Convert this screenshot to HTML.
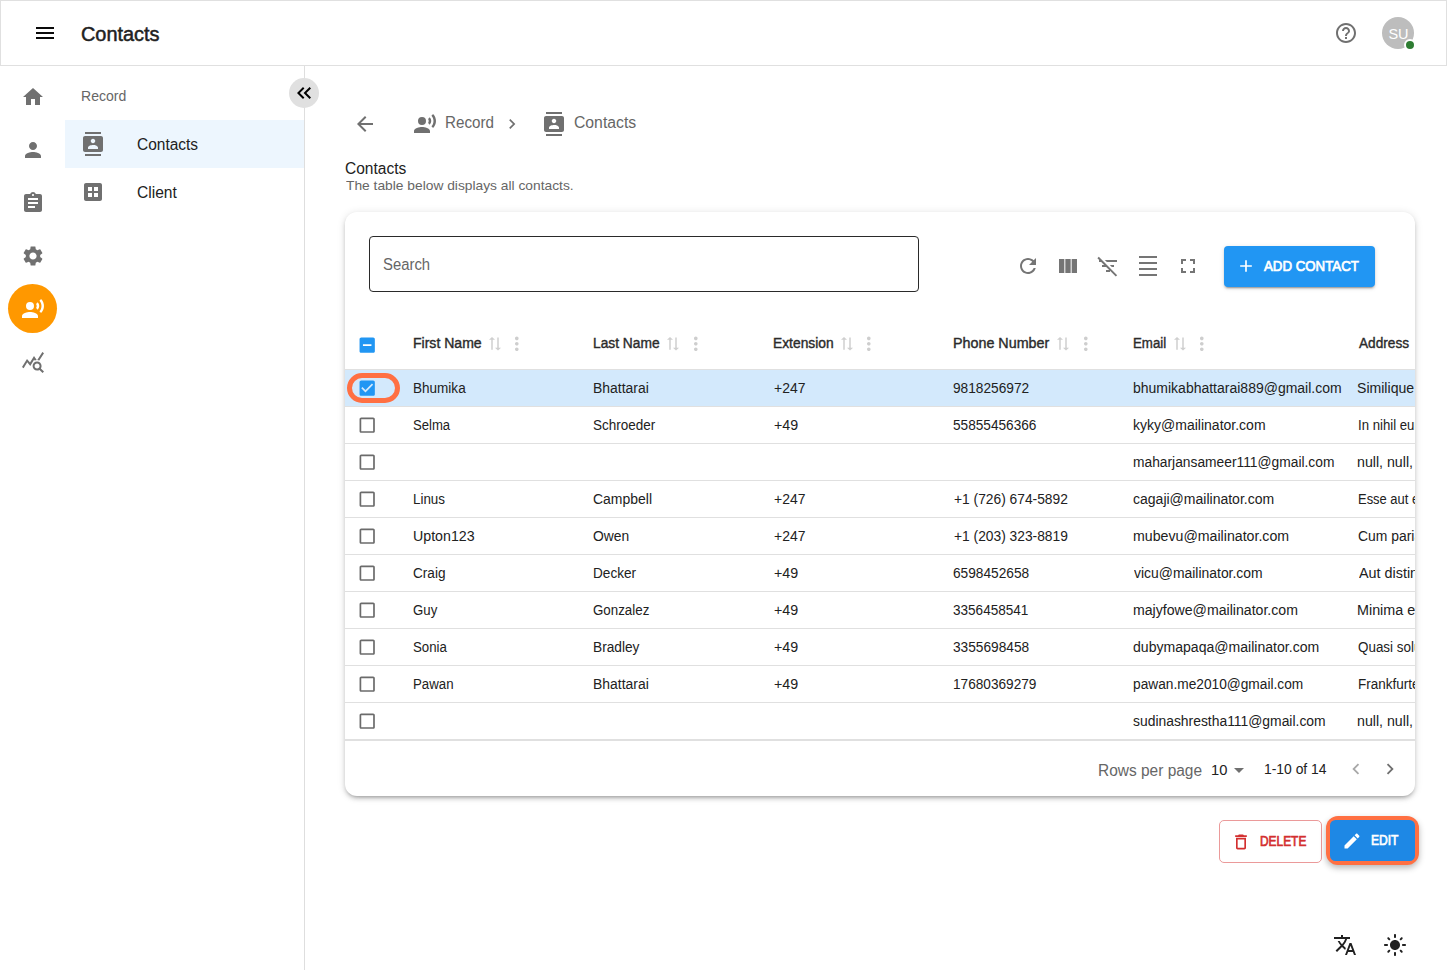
<!DOCTYPE html>
<html lang="en"><head><meta charset="utf-8"><title>Contacts</title><style>
*{box-sizing:border-box;margin:0;padding:0}
html,body{width:1447px;height:970px;overflow:hidden;background:#fff;font-family:"Liberation Sans",sans-serif;}
body{position:relative}
.i{position:absolute;display:block}
.t{position:absolute;white-space:nowrap;height:40px;line-height:40px;transform-origin:0 50%;}
#hdr{position:absolute;left:0;top:0;width:1447px;height:66px;border:1px solid #e0e0e0;background:#fff}
#av{position:absolute;left:1382px;top:17px;width:32px;height:32px;border-radius:50%;background:#bdbdbd;}
#dot{position:absolute;left:1404px;top:39px;width:12px;height:12px;border-radius:50%;background:#2e7d32;border:2px solid #fff}
#side{position:absolute;left:304px;top:66px;width:1px;height:904px;background:#dedede}
#orb{position:absolute;left:8px;top:284px;width:49px;height:49px;border-radius:50%;background:#ff9800}
#sel{position:absolute;left:65px;top:120px;width:239px;height:48px;background:#edf6fe}
#coll{position:absolute;left:289px;top:78px;width:30px;height:30px;border-radius:50%;background:#e0e0e0}
#card{position:absolute;left:345px;top:212px;width:1070px;height:584px;border-radius:12px;background:#fff;box-shadow:0 3px 3px -2px rgba(0,0,0,.2),0 3px 4px 0 rgba(0,0,0,.14),0 1px 8px 0 rgba(0,0,0,.12);}
#search{position:absolute;left:369px;top:236px;width:550px;height:56px;border:1px solid #2a2a2a;border-radius:4px}
#addbtn{position:absolute;left:1224px;top:246px;width:151px;height:41px;border-radius:4px;background:#2196f3;box-shadow:0 3px 1px -2px rgba(0,0,0,.2),0 2px 2px 0 rgba(0,0,0,.14),0 1px 5px 0 rgba(0,0,0,.12)}
#rows{position:absolute;left:345px;top:0;width:1070px;height:970px;overflow:hidden;}
#rows>*{margin-left:-345px}
.rowsel{position:absolute;left:345px;width:1070px;height:36px;background:#d3e9fc}
.rline{position:absolute;left:345px;width:1070px;height:1px;background:#e0e0e0}
#ring{position:absolute;left:347px;top:373px;width:53px;height:29.5px;border:5px solid #ff7043;border-radius:15px}
#delbtn{position:absolute;left:1219px;top:820px;width:103px;height:43px;border:1px solid #eb9a9a;border-radius:5px;background:#fff}
#editring{position:absolute;left:1326px;top:816px;width:93px;height:49px;border-radius:12px;background:#ff7043;box-shadow:0 3px 6px rgba(0,0,0,.28)}
#editbtn{position:absolute;left:1330px;top:820px;width:85px;height:41px;border-radius:5.5px;background:#1e88e5;}
</style></head><body>
<div id="hdr"></div>
<svg class="i" style="left:32.5px;top:21px;width:24px;height:24px;" viewBox="0 0 24 24"><path fill="#0a0a0a" d="M3 18h18v-2H3v2zm0-5h18v-2H3v2zm0-7v2h18V6H3z"/></svg>
<div class="t" style="left:81.01px;top:14px;font-size:20px;color:#212121;transform:scaleX(0.9949);-webkit-text-stroke:0.5px #212121;">Contacts</div>
<svg class="i" style="left:1334px;top:21px;width:24px;height:24px;" viewBox="0 0 24 24"><path fill="#707070" d="M11 18h2v-2h-2v2zm1-16C6.480 2 2 6.480 2 12s4.480 10 10 10 10-4.480 10-10S17.520 2 12 2zm0 18c-4.410 0-8-3.590-8-8s3.590-8 8-8 8 3.590 8 8-3.590 8-8 8zm0-14c-2.210 0-4 1.790-4 4h2c0-1.100.900-2 2-2s2 .900 2 2c0 2-3 1.750-3 5h2c0-2.250 3-2.500 3-5 0-2.210-1.790-4-4-4z"/></svg>
<div id="av"></div><div id="dot"></div>
<div class="t" style="left:1388.40px;top:14px;font-size:14.5px;color:#ffffff;transform:scaleX(1.0000);">SU</div>
<div id="side"></div>
<svg class="i" style="left:21px;top:85px;width:24px;height:24px;" viewBox="0 0 24 24"><path fill="#707070" d="M10 20v-6h4v6h5v-8h3L12 3 2 12h3v8z"/></svg>
<svg class="i" style="left:21px;top:138px;width:24px;height:24px;" viewBox="0 0 24 24"><path fill="#707070" d="M12 12c2.21 0 4-1.79 4-4s-1.79-4-4-4-4 1.79-4 4 1.79 4 4 4zm0 2c-2.67 0-8 1.34-8 4v2h16v-2c0-2.66-5.33-4-8-4z"/></svg>
<svg class="i" style="left:21px;top:191px;width:24px;height:24px;" viewBox="0 0 24 24"><path fill="#707070" d="M19 3h-4.18C14.4 1.84 13.3 1 12 1c-1.3 0-2.4.84-2.82 2H5c-1.1 0-2 .9-2 2v14c0 1.1.9 2 2 2h14c1.1 0 2-.9 2-2V5c0-1.1-.9-2-2-2zm-7 0c.55 0 1 .45 1 1s-.45 1-1 1-1-.45-1-1 .45-1 1-1zm2 14H7v-2h7v2zm3-4H7v-2h10v2zm0-4H7V7h10v2z"/></svg>
<svg class="i" style="left:21px;top:244px;width:24px;height:24px;" viewBox="0 0 24 24"><path fill="#707070" d="M19.14 12.94c.04-.3.06-.61.06-.94 0-.32-.02-.64-.07-.94l2.03-1.58c.18-.14.23-.41.12-.61l-1.92-3.32c-.12-.22-.37-.29-.59-.22l-2.39.96c-.5-.38-1.03-.7-1.62-.94l-.36-2.54c-.04-.24-.24-.41-.48-.41h-3.84c-.24 0-.43.17-.47.41l-.36 2.54c-.59.24-1.13.57-1.62.94l-2.39-.96c-.22-.08-.47 0-.59.22L2.74 8.87c-.12.21-.08.47.12.61l2.03 1.58c-.05.3-.09.63-.09.94s.02.64.07.94l-2.03 1.58c-.18.14-.23.41-.12.61l1.92 3.32c.12.22.37.29.59.22l2.39-.96c.5.38 1.03.7 1.62.94l.36 2.54c.05.24.24.41.48.41h3.84c.24 0 .44-.17.47-.41l.36-2.54c.59-.24 1.13-.56 1.62-.94l2.39.96c.22.08.47 0 .59-.22l1.92-3.32c.12-.22.07-.47-.12-.61l-2.01-1.58zM12 15.6c-1.98 0-3.6-1.62-3.6-3.6s1.62-3.6 3.6-3.6 3.6 1.62 3.6 3.6-1.62 3.6-3.6 3.6z"/></svg>
<div id="orb"></div>
<svg class="i" style="left:21px;top:297px;width:24px;height:24px;" viewBox="0 0 24 24"><path fill="#ffffff" d="M13 9a4 4 0 1 1-8 0 4 4 0 0 1 8 0zM9 15c-2.67 0-8 1.34-8 4v2h16v-2c0-2.66-5.33-4-8-4zm7.76-9.640l-1.680 1.690c.84 1.180.84 2.710 0 3.890l1.680 1.690c2.020-2.020 2.020-5.070 0-7.270zM20.070 2l-1.630 1.630c2.770 3.020 2.770 7.560 0 10.740L20.070 16c3.900-3.890 3.910-9.950 0-14z"/></svg>
<svg class="i" style="left:21px;top:350px;width:24px;height:24px;" viewBox="0 0 24 24"><path fill="#707070" d="M19.88 18.47c.44-.7.7-1.51.7-2.39 0-2.49-2.01-4.5-4.5-4.5s-4.5 2.01-4.5 4.5 2.01 4.5 4.49 4.5c.88 0 1.7-.26 2.39-.7L21.58 23 23 21.580l-3.120-3.110zm-3.800.110c-1.380 0-2.500-1.120-2.500-2.500s1.120-2.500 2.500-2.500 2.500 1.120 2.500 2.500-1.120 2.500-2.500 2.500zm-.360-8.500c-.740.020-1.450.180-2.100.450l-.550-.830-3.800 6.180-3.010-3.520-3.630 5.810L1 17l5-8 3 3.500L13 6l2.720 4.080zm2.590.500c-.640-.280-1.330-.450-2.050-.490L21.380 2 23 3.180l-4.690 7.400z"/></svg>
<div class="t" style="left:80.90px;top:76px;font-size:14px;color:#666666;transform:scaleX(1.0023);">Record</div>
<div id="sel"></div>
<svg class="i" style="left:81px;top:132px;width:24px;height:24px;" viewBox="0 0 24 24"><path fill="#707070" d="M20 0H4v2h16V0zM4 24h16v-2H4v2zM20 4H4c-1.1 0-2 .9-2 2v12c0 1.1.9 2 2 2h16c1.1 0 2-.9 2-2V6c0-1.1-.9-2-2-2zm-8 2.750c1.240 0 2.250 1.010 2.250 2.250s-1.010 2.250-2.250 2.250S9.750 10.240 9.750 9 10.760 6.750 12 6.750zM17 17H7v-1.500c0-1.670 3.330-2.500 5-2.500s5 .830 5 2.500V17z"/></svg>
<div class="t" style="left:137.03px;top:125px;font-size:16px;color:#212121;transform:scaleX(0.9677);">Contacts</div>
<svg class="i" style="left:81px;top:180px;width:24px;height:24px;" viewBox="0 0 24 24"><path fill="#707070" d="M19 3H5c-1.1 0-2 .9-2 2v14c0 1.1.9 2 2 2h14c1.1 0 2-.9 2-2V5c0-1.1-.9-2-2-2zm-8 14H7v-4h4v4zm0-6H7V7h4v4zm6 6h-4v-4h4v4zm0-6h-4V7h4v4z"/></svg>
<div class="t" style="left:137.03px;top:173px;font-size:16px;color:#212121;transform:scaleX(0.9750);">Client</div>
<div id="coll"></div>
<svg class="i" style="left:292px;top:81px;width:24px;height:24px;" viewBox="0 0 24 24"><path fill="#000000" d="M17.59 18 19 16.590 14.420 12 19 7.410 17.590 6l-6 6zM11 18l1.410-1.410L7.830 12l4.580-4.590L11 6l-6 6z"/></svg>
<svg class="i" style="left:353px;top:111.5px;width:24px;height:24px;" viewBox="0 0 24 24"><path fill="#707070" d="M20 11H7.830l5.590-5.590L12 4l-8 8 8 8 1.410-1.410L7.830 13H20v-2z"/></svg>
<svg class="i" style="left:413.2px;top:112px;width:24px;height:24px;" viewBox="0 0 24 24"><path fill="#707070" d="M13 9a4 4 0 1 1-8 0 4 4 0 0 1 8 0zM9 15c-2.67 0-8 1.34-8 4v2h16v-2c0-2.66-5.33-4-8-4zm7.76-9.640l-1.680 1.690c.84 1.180.84 2.710 0 3.890l1.680 1.690c2.020-2.020 2.020-5.070 0-7.270zM20.070 2l-1.630 1.630c2.770 3.020 2.770 7.560 0 10.740L20.070 16c3.900-3.890 3.910-9.950 0-14z"/></svg>
<div class="t" style="left:445.05px;top:103px;font-size:16px;color:#666666;transform:scaleX(0.9480);">Record</div>
<svg class="i" style="left:502px;top:113.5px;width:20px;height:20px;" viewBox="0 0 24 24"><path fill="#707070" d="M10 6L8.590 7.410 13.170 12l-4.580 4.590L10 18l6-6z"/></svg>
<svg class="i" style="left:542px;top:112.1px;width:24px;height:24px;" viewBox="0 0 24 24"><path fill="#707070" d="M20 0H4v2h16V0zM4 24h16v-2H4v2zM20 4H4c-1.1 0-2 .9-2 2v12c0 1.1.9 2 2 2h16c1.1 0 2-.9 2-2V6c0-1.1-.9-2-2-2zm-8 2.750c1.240 0 2.250 1.010 2.250 2.250s-1.010 2.250-2.250 2.250S9.750 10.240 9.750 9 10.760 6.750 12 6.750zM17 17H7v-1.500c0-1.670 3.330-2.500 5-2.500s5 .830 5 2.500V17z"/></svg>
<div class="t" style="left:574.02px;top:103px;font-size:16px;color:#666666;transform:scaleX(0.9839);">Contacts</div>
<div class="t" style="left:345.13px;top:149px;font-size:16px;color:#212121;transform:scaleX(0.9694);">Contacts</div>
<div class="t" style="left:345.50px;top:166px;font-size:13px;color:#666666;transform:scaleX(1.0607);">The table below displays all contacts.</div>
<div id="card"></div>
<div id="search"></div>
<div class="t" style="left:382.97px;top:245px;font-size:16px;color:#666666;transform:scaleX(0.9286);">Search</div>
<svg class="i" style="left:1016px;top:254px;width:24px;height:24px;" viewBox="0 0 24 24"><path fill="#757575" d="M17.650 6.350C16.200 4.900 14.210 4 12 4c-4.420 0-7.990 3.580-7.990 8s3.570 8 7.990 8c3.730 0 6.840-2.550 7.730-6h-2.080c-.820 2.330-3.040 4-5.650 4-3.310 0-6-2.690-6-6s2.690-6 6-6c1.660 0 3.140.690 4.220 1.780L13 11h7V4l-2.350 2.350z"/></svg>
<svg class="i" style="left:1056px;top:254px;width:24px;height:24px;" viewBox="0 0 24 24"><path fill="#757575" d="M14.670 5v14H9.330V5h5.340zm1 14H21V5h-5.330v14zm-7.340 0V5H3v14h5.330z"/></svg>
<svg class="i" style="left:1096px;top:254px;width:24px;height:24px;" viewBox="0 0 24 24"><path fill="#757575" d="M10.830 8H21V6H8.830l2 2zm5 5H18v-2h-4.170l2 2zM14 16.830V18h-4v-2h3.170l-3-3H6v-2h2.170l-3-3H3V6h.170L1.390 4.220 2.800 2.810l18.380 18.380-1.410 1.410L14 16.830z"/></svg>
<svg class="i" style="left:1136px;top:254px;width:24px;height:24px;" viewBox="0 0 24 24"><path fill="#757575" d="M3 2h18v2H3zm0 18h18v2H3zm0-6h18v2H3zm0-6h18v2H3z"/></svg>
<svg class="i" style="left:1176px;top:254px;width:24px;height:24px;" viewBox="0 0 24 24"><path fill="#757575" d="M7 14H5v5h5v-2H7v-3zm-2-4h2V7h3V5H5v5zm12 7h-3v2h5v-5h-2v3zM14 5v2h3v3h2V5h-5z"/></svg>
<div id="addbtn"></div>
<svg class="i" style="left:1236px;top:256.3px;width:20px;height:20px;" viewBox="0 0 24 24"><path fill="#ffffff" d="M19 13h-6v6h-2v-6H5v-2h6V5h2v6h6v2z"/></svg>
<div class="t" style="left:1263.90px;top:246px;font-size:14px;color:#ffffff;transform:scaleX(0.9480);-webkit-text-stroke:0.7px #ffffff;">ADD CONTACT</div>
<svg class="i" style="left:356.8px;top:334.8px;width:20.4px;height:20.4px;" viewBox="0 0 24 24"><path fill="#2196f3" d="M19 3H5c-1.100 0-2 .900-2 2v14c0 1.100.900 2 2 2h14c1.100 0 2-.900 2-2V5c0-1.100-.900-2-2-2zm-2 10H7v-2h10v2z"/></svg>
<div class="t" style="left:412.90px;top:323px;font-size:14px;color:#2b2b2b;transform:scaleX(1.0030);-webkit-text-stroke:0.38px #2b2b2b;">First Name</div>
<div class="t" style="left:592.82px;top:323px;font-size:14px;color:#2b2b2b;transform:scaleX(0.9836);-webkit-text-stroke:0.38px #2b2b2b;">Last Name</div>
<div class="t" style="left:773.21px;top:323px;font-size:14px;color:#2b2b2b;transform:scaleX(0.9867);-webkit-text-stroke:0.38px #2b2b2b;">Extension</div>
<div class="t" style="left:952.98px;top:323px;font-size:14px;color:#2b2b2b;transform:scaleX(1.0226);-webkit-text-stroke:0.38px #2b2b2b;">Phone Number</div>
<div class="t" style="left:1133.15px;top:323px;font-size:14px;color:#2b2b2b;transform:scaleX(0.9471);-webkit-text-stroke:0.38px #2b2b2b;">Email</div>
<div class="t" style="left:1358.90px;top:323px;font-size:14px;color:#2b2b2b;transform:scaleX(0.9745);-webkit-text-stroke:0.38px #2b2b2b;">Address</div>
<svg class="i" style="left:486px;top:334.4px;width:18px;height:18px;opacity:.28" viewBox="0 0 24 24"><g transform="rotate(-90 12 12) translate(12 12) scale(.9 1) translate(-12 -12) translate(-1 0)"><path fill="#555" d="M18 12l4-4-4-4v3H3v2h15zM6 12l-4 4 4 4v-3h15v-2H6v-3z"/></g></svg>
<svg class="i" style="left:506.4px;top:332.7px;width:21.6px;height:21.6px;" viewBox="0 0 24 24"><path fill="#cecece" d="M12 8c1.100 0 2-.900 2-2s-.900-2-2-2-2 .900-2 2 .900 2 2 2zm0 2c-1.100 0-2 .900-2 2s.900 2 2 2 2-.900 2-2-.900-2-2-2zm0 6c-1.100 0-2 .900-2 2s.900 2 2 2 2-.900 2-2-.900-2-2-2z"/></svg>
<svg class="i" style="left:664.4px;top:334.4px;width:18px;height:18px;opacity:.28" viewBox="0 0 24 24"><g transform="rotate(-90 12 12) translate(12 12) scale(.9 1) translate(-12 -12) translate(-1 0)"><path fill="#555" d="M18 12l4-4-4-4v3H3v2h15zM6 12l-4 4 4 4v-3h15v-2H6v-3z"/></g></svg>
<svg class="i" style="left:684.8px;top:332.7px;width:21.6px;height:21.6px;" viewBox="0 0 24 24"><path fill="#cecece" d="M12 8c1.100 0 2-.900 2-2s-.900-2-2-2-2 .900-2 2 .900 2 2 2zm0 2c-1.100 0-2 .900-2 2s.900 2 2 2 2-.900 2-2-.900-2-2-2zm0 6c-1.100 0-2 .900-2 2s.900 2 2 2 2-.900 2-2-.900-2-2-2z"/></svg>
<svg class="i" style="left:838px;top:334.4px;width:18px;height:18px;opacity:.28" viewBox="0 0 24 24"><g transform="rotate(-90 12 12) translate(12 12) scale(.9 1) translate(-12 -12) translate(-1 0)"><path fill="#555" d="M18 12l4-4-4-4v3H3v2h15zM6 12l-4 4 4 4v-3h15v-2H6v-3z"/></g></svg>
<svg class="i" style="left:858.4px;top:332.7px;width:21.6px;height:21.6px;" viewBox="0 0 24 24"><path fill="#cecece" d="M12 8c1.100 0 2-.900 2-2s-.900-2-2-2-2 .900-2 2 .900 2 2 2zm0 2c-1.100 0-2 .900-2 2s.900 2 2 2 2-.900 2-2-.900-2-2-2zm0 6c-1.100 0-2 .900-2 2s.900 2 2 2 2-.900 2-2-.900-2-2-2z"/></svg>
<svg class="i" style="left:1054.1px;top:334.4px;width:18px;height:18px;opacity:.28" viewBox="0 0 24 24"><g transform="rotate(-90 12 12) translate(12 12) scale(.9 1) translate(-12 -12) translate(-1 0)"><path fill="#555" d="M18 12l4-4-4-4v3H3v2h15zM6 12l-4 4 4 4v-3h15v-2H6v-3z"/></g></svg>
<svg class="i" style="left:1074.5px;top:332.7px;width:21.6px;height:21.6px;" viewBox="0 0 24 24"><path fill="#cecece" d="M12 8c1.100 0 2-.900 2-2s-.900-2-2-2-2 .900-2 2 .900 2 2 2zm0 2c-1.100 0-2 .900-2 2s.900 2 2 2 2-.900 2-2-.900-2-2-2zm0 6c-1.100 0-2 .900-2 2s.900 2 2 2 2-.900 2-2-.900-2-2-2z"/></svg>
<svg class="i" style="left:1170.9px;top:334.4px;width:18px;height:18px;opacity:.28" viewBox="0 0 24 24"><g transform="rotate(-90 12 12) translate(12 12) scale(.9 1) translate(-12 -12) translate(-1 0)"><path fill="#555" d="M18 12l4-4-4-4v3H3v2h15zM6 12l-4 4 4 4v-3h15v-2H6v-3z"/></g></svg>
<svg class="i" style="left:1191.3px;top:332.7px;width:21.6px;height:21.6px;" viewBox="0 0 24 24"><path fill="#cecece" d="M12 8c1.100 0 2-.900 2-2s-.900-2-2-2-2 .900-2 2 .900 2 2 2zm0 2c-1.100 0-2 .900-2 2s.900 2 2 2 2-.900 2-2-.900-2-2-2zm0 6c-1.100 0-2 .900-2 2s.900 2 2 2 2-.900 2-2-.900-2-2-2z"/></svg>
<div id="rows">
<div class="rowsel" style="top:370px"></div>
<div class="rline" style="top:406px"></div>
<svg class="i" style="left:356.8px;top:377.8px;width:20.4px;height:20.4px;" viewBox="0 0 24 24"><path fill="#2196f3" d="M19 3H5c-1.110 0-2 .900-2 2v14c0 1.100.890 2 2 2h14c1.110 0 2-.900 2-2V5c0-1.100-.890-2-2-2zm-9 14l-5-5 1.410-1.410L10 14.170l7.590-7.590L19 8l-9 9z"/></svg>
<div class="t" style="left:412.73px;top:368px;font-size:14px;color:#212121;transform:scaleX(0.9667);">Bhumika</div>
<div class="t" style="left:592.81px;top:368px;font-size:14px;color:#212121;transform:scaleX(0.9944);">Bhattarai</div>
<div class="t" style="left:773.90px;top:368px;font-size:14px;color:#212121;transform:scaleX(0.9967);">+247</div>
<div class="t" style="left:952.82px;top:368px;font-size:14px;color:#212121;transform:scaleX(0.9789);">9818256972</div>
<div class="t" style="left:1133.10px;top:368px;font-size:14px;color:#212121;transform:scaleX(0.9995);">bhumikabhattarai889@gmail.com</div>
<div class="t" style="left:1357.49px;top:368px;font-size:14px;color:#212121;transform:scaleX(1.0055);">Similique</div>
<div class="rline" style="top:443px"></div>
<svg class="i" style="left:356.8px;top:414.8px;width:20.4px;height:20.4px;" viewBox="0 0 24 24"><path fill="#6b6b6b" d="M19 5v14H5V5h14m0-2H5c-1.100 0-2 .900-2 2v14c0 1.100.900 2 2 2h14c1.100 0 2-.900 2-2V5c0-1.100-.900-2-2-2z"/></svg>
<div class="t" style="left:412.76px;top:405px;font-size:14px;color:#212121;transform:scaleX(0.9359);">Selma</div>
<div class="t" style="left:592.84px;top:405px;font-size:14px;color:#212121;transform:scaleX(0.9641);">Schroeder</div>
<div class="t" style="left:773.88px;top:405px;font-size:14px;color:#212121;transform:scaleX(1.0182);">+49</div>
<div class="t" style="left:952.83px;top:405px;font-size:14px;color:#212121;transform:scaleX(0.9738);">55855456366</div>
<div class="t" style="left:1133.10px;top:405px;font-size:14px;color:#212121;transform:scaleX(1.0000);">kyky@mailinator.com</div>
<div class="t" style="left:1357.56px;top:405px;font-size:14px;color:#212121;transform:scaleX(0.9412);">In nihil eum</div>
<div class="rline" style="top:480px"></div>
<svg class="i" style="left:356.8px;top:451.8px;width:20.4px;height:20.4px;" viewBox="0 0 24 24"><path fill="#6b6b6b" d="M19 5v14H5V5h14m0-2H5c-1.100 0-2 .900-2 2v14c0 1.100.900 2 2 2h14c1.100 0 2-.900 2-2V5c0-1.100-.900-2-2-2z"/></svg>
<div class="t" style="left:1133.11px;top:442px;font-size:14px;color:#212121;transform:scaleX(0.9857);">maharjansameer111@gmail.com</div>
<div class="t" style="left:1357.49px;top:442px;font-size:14px;color:#212121;transform:scaleX(1.0132);">null, null, null</div>
<div class="rline" style="top:517px"></div>
<svg class="i" style="left:356.8px;top:488.8px;width:20.4px;height:20.4px;" viewBox="0 0 24 24"><path fill="#6b6b6b" d="M19 5v14H5V5h14m0-2H5c-1.100 0-2 .900-2 2v14c0 1.100.900 2 2 2h14c1.100 0 2-.900 2-2V5c0-1.100-.900-2-2-2z"/></svg>
<div class="t" style="left:412.74px;top:479px;font-size:14px;color:#212121;transform:scaleX(0.9563);">Linus</div>
<div class="t" style="left:592.80px;top:479px;font-size:14px;color:#212121;transform:scaleX(0.9982);">Campbell</div>
<div class="t" style="left:773.90px;top:479px;font-size:14px;color:#212121;transform:scaleX(0.9967);">+247</div>
<div class="t" style="left:953.91px;top:479px;font-size:14px;color:#212121;transform:scaleX(0.9851);">+1 (726) 674-5892</div>
<div class="t" style="left:1133.10px;top:479px;font-size:14px;color:#212121;transform:scaleX(1.0007);">cagaji@mailinator.com</div>
<div class="t" style="left:1357.58px;top:479px;font-size:14px;color:#212121;transform:scaleX(0.9245);">Esse aut et</div>
<div class="rline" style="top:554px"></div>
<svg class="i" style="left:356.8px;top:525.8px;width:20.4px;height:20.4px;" viewBox="0 0 24 24"><path fill="#6b6b6b" d="M19 5v14H5V5h14m0-2H5c-1.100 0-2 .900-2 2v14c0 1.100.900 2 2 2h14c1.100 0 2-.900 2-2V5c0-1.100-.900-2-2-2z"/></svg>
<div class="t" style="left:412.68px;top:516px;font-size:14px;color:#212121;transform:scaleX(1.0153);">Upton123</div>
<div class="t" style="left:592.81px;top:516px;font-size:14px;color:#212121;transform:scaleX(0.9886);">Owen</div>
<div class="t" style="left:773.90px;top:516px;font-size:14px;color:#212121;transform:scaleX(0.9967);">+247</div>
<div class="t" style="left:953.91px;top:516px;font-size:14px;color:#212121;transform:scaleX(0.9851);">+1 (203) 323-8819</div>
<div class="t" style="left:1133.09px;top:516px;font-size:14px;color:#212121;transform:scaleX(1.0118);">mubevu@mailinator.com</div>
<div class="t" style="left:1357.51px;top:516px;font-size:14px;color:#212121;transform:scaleX(0.9927);">Cum pariatur</div>
<div class="rline" style="top:591px"></div>
<svg class="i" style="left:356.8px;top:562.8px;width:20.4px;height:20.4px;" viewBox="0 0 24 24"><path fill="#6b6b6b" d="M19 5v14H5V5h14m0-2H5c-1.100 0-2 .900-2 2v14c0 1.100.900 2 2 2h14c1.100 0 2-.900 2-2V5c0-1.100-.900-2-2-2z"/></svg>
<div class="t" style="left:412.73px;top:553px;font-size:14px;color:#212121;transform:scaleX(0.9719);">Craig</div>
<div class="t" style="left:592.83px;top:553px;font-size:14px;color:#212121;transform:scaleX(0.9721);">Decker</div>
<div class="t" style="left:773.88px;top:553px;font-size:14px;color:#212121;transform:scaleX(1.0182);">+49</div>
<div class="t" style="left:952.82px;top:553px;font-size:14px;color:#212121;transform:scaleX(0.9789);">6598452658</div>
<div class="t" style="left:1134.10px;top:553px;font-size:14px;color:#212121;transform:scaleX(0.9946);">vicu@mailinator.com</div>
<div class="t" style="left:1358.50px;top:553px;font-size:14px;color:#212121;transform:scaleX(1.0265);">Aut distinctio</div>
<div class="rline" style="top:628px"></div>
<svg class="i" style="left:356.8px;top:599.8px;width:20.4px;height:20.4px;" viewBox="0 0 24 24"><path fill="#6b6b6b" d="M19 5v14H5V5h14m0-2H5c-1.100 0-2 .900-2 2v14c0 1.100.900 2 2 2h14c1.100 0 2-.900 2-2V5c0-1.100-.900-2-2-2z"/></svg>
<div class="t" style="left:412.76px;top:590px;font-size:14px;color:#212121;transform:scaleX(0.9440);">Guy</div>
<div class="t" style="left:592.85px;top:590px;font-size:14px;color:#212121;transform:scaleX(0.9517);">Gonzalez</div>
<div class="t" style="left:773.88px;top:590px;font-size:14px;color:#212121;transform:scaleX(1.0182);">+49</div>
<div class="t" style="left:952.83px;top:590px;font-size:14px;color:#212121;transform:scaleX(0.9684);">3356458541</div>
<div class="t" style="left:1133.09px;top:590px;font-size:14px;color:#212121;transform:scaleX(1.0080);">majyfowe@mailinator.com</div>
<div class="t" style="left:1357.47px;top:590px;font-size:14px;color:#212121;transform:scaleX(1.0250);">Minima et</div>
<div class="rline" style="top:665px"></div>
<svg class="i" style="left:356.8px;top:636.8px;width:20.4px;height:20.4px;" viewBox="0 0 24 24"><path fill="#6b6b6b" d="M19 5v14H5V5h14m0-2H5c-1.100 0-2 .900-2 2v14c0 1.100.900 2 2 2h14c1.100 0 2-.900 2-2V5c0-1.100-.900-2-2-2z"/></svg>
<div class="t" style="left:412.75px;top:627px;font-size:14px;color:#212121;transform:scaleX(0.9457);">Sonia</div>
<div class="t" style="left:592.82px;top:627px;font-size:14px;color:#212121;transform:scaleX(0.9783);">Bradley</div>
<div class="t" style="left:773.88px;top:627px;font-size:14px;color:#212121;transform:scaleX(1.0182);">+49</div>
<div class="t" style="left:952.82px;top:627px;font-size:14px;color:#212121;transform:scaleX(0.9789);">3355698458</div>
<div class="t" style="left:1133.10px;top:627px;font-size:14px;color:#212121;transform:scaleX(1.0043);">dubymapaqa@mailinator.com</div>
<div class="t" style="left:1357.54px;top:627px;font-size:14px;color:#212121;transform:scaleX(0.9579);">Quasi soluta</div>
<div class="rline" style="top:702px"></div>
<svg class="i" style="left:356.8px;top:673.8px;width:20.4px;height:20.4px;" viewBox="0 0 24 24"><path fill="#6b6b6b" d="M19 5v14H5V5h14m0-2H5c-1.100 0-2 .900-2 2v14c0 1.100.900 2 2 2h14c1.100 0 2-.900 2-2V5c0-1.100-.900-2-2-2z"/></svg>
<div class="t" style="left:412.75px;top:664px;font-size:14px;color:#212121;transform:scaleX(0.9463);">Pawan</div>
<div class="t" style="left:592.81px;top:664px;font-size:14px;color:#212121;transform:scaleX(0.9944);">Bhattarai</div>
<div class="t" style="left:773.88px;top:664px;font-size:14px;color:#212121;transform:scaleX(1.0182);">+49</div>
<div class="t" style="left:952.83px;top:664px;font-size:14px;color:#212121;transform:scaleX(0.9738);">17680369279</div>
<div class="t" style="left:1133.12px;top:664px;font-size:14px;color:#212121;transform:scaleX(0.9797);">pawan.me2010@gmail.com</div>
<div class="t" style="left:1357.54px;top:664px;font-size:14px;color:#212121;transform:scaleX(0.9636);">Frankfurter</div>
<div class="rline" style="top:739px"></div>
<svg class="i" style="left:356.8px;top:710.8px;width:20.4px;height:20.4px;" viewBox="0 0 24 24"><path fill="#6b6b6b" d="M19 5v14H5V5h14m0-2H5c-1.100 0-2 .900-2 2v14c0 1.100.900 2 2 2h14c1.100 0 2-.900 2-2V5c0-1.100-.900-2-2-2z"/></svg>
<div class="t" style="left:1133.11px;top:701px;font-size:14px;color:#212121;transform:scaleX(0.9917);">sudinashrestha111@gmail.com</div>
<div class="t" style="left:1357.49px;top:701px;font-size:14px;color:#212121;transform:scaleX(1.0132);">null, null, null</div>
</div>
<div id="ring"></div>
<div class="rline" style="top:369px"></div>
<div class="rline" style="top:740px"></div>
<div class="t" style="left:1098.23px;top:751px;font-size:16px;color:#666666;transform:scaleX(0.9670);">Rows per page</div>
<div class="t" style="left:1211.12px;top:750px;font-size:15px;color:#212121;transform:scaleX(0.9800);">10</div>
<svg class="i" style="left:1227.3px;top:757.5px;width:24px;height:24px;" viewBox="0 0 24 24"><path fill="#707070" d="M7 10l5 5 5-5z"/></svg>
<div class="t" style="left:1264.01px;top:749px;font-size:14px;color:#212121;transform:scaleX(0.9919);">1-10 of 14</div>
<svg class="i" style="left:1345px;top:758px;width:22px;height:22px;" viewBox="0 0 24 24"><path fill="#a8a8a8" d="M15.410 7.410L14 6l-6 6 6 6 1.410-1.410L10.830 12z"/></svg>
<svg class="i" style="left:1379px;top:758px;width:22px;height:22px;" viewBox="0 0 24 24"><path fill="#707070" d="M10 6L8.590 7.410 13.170 12l-4.580 4.590L10 18l6-6z"/></svg>
<div id="delbtn"></div>
<svg class="i" style="left:1231px;top:832px;width:20px;height:20px;" viewBox="0 0 24 24"><path fill="#d32f2f" d="M6 19c0 1.100.900 2 2 2h8c1.100 0 2-.900 2-2V7H6v12zM8 9h8v10H8V9zm7.500-5l-1-1h-5l-1 1H5v2h14V4h-3.500z"/></svg>
<div class="t" style="left:1259.85px;top:821px;font-size:14px;color:#d32f2f;transform:scaleX(0.8509);-webkit-text-stroke:0.7px #d32f2f;">DELETE</div>
<div id="editring"></div><div id="editbtn"></div>
<svg class="i" style="left:1342px;top:831px;width:20px;height:20px;" viewBox="0 0 24 24"><path fill="#ffffff" d="M3 17.250V21h3.750L17.810 9.940l-3.750-3.750L3 17.250zM20.710 7.040c.390-.390.390-1.020 0-1.410l-2.340-2.340c-.390-.390-1.020-.390-1.410 0l-1.830 1.830 3.750 3.750 1.830-1.830z"/></svg>
<div class="t" style="left:1370.94px;top:820px;font-size:14px;color:#ffffff;transform:scaleX(0.8613);-webkit-text-stroke:0.7px #ffffff;">EDIT</div>
<svg class="i" style="left:1333px;top:933px;width:24px;height:24px;" viewBox="0 0 24 24"><path fill="#212121" d="M12.870 15.070l-2.540-2.510.030-.030c1.740-1.940 2.980-4.170 3.710-6.530H17V4h-7V2H8v2H1v1.990h11.170C11.500 7.920 10.440 9.750 9 11.350 8.070 10.320 7.300 9.190 6.690 8h-2c.730 1.630 1.730 3.170 2.980 4.560l-5.090 5.020L4 19l5-5 3.110 3.110.760-2.040zM18.500 10h-2L12 22h2l1.120-3h4.750L21 22h2l-4.500-12zm-2.620 7l1.620-4.330L19.120 17h-3.240z"/></svg>
<svg class="i" style="left:1383px;top:933px;width:24px;height:24px;" viewBox="0 0 24 24"><path fill="#212121" d="M12 7c-2.760 0-5 2.240-5 5s2.240 5 5 5 5-2.240 5-5-2.240-5-5-5zM2 13h2c.550 0 1-.450 1-1s-.450-1-1-1H2c-.550 0-1 .450-1 1s.450 1 1 1zm18 0h2c.550 0 1-.450 1-1s-.450-1-1-1h-2c-.550 0-1 .450-1 1s.450 1 1 1zM11 2v2c0 .550.450 1 1 1s1-.450 1-1V2c0-.550-.450-1-1-1s-1 .450-1 1zm0 18v2c0 .550.450 1 1 1s1-.450 1-1v-2c0-.550-.450-1-1-1s-1 .450-1 1zM5.990 4.580c-.390-.390-1.030-.390-1.410 0-.390.390-.390 1.030 0 1.410l1.060 1.060c.390.390 1.030.390 1.410 0s.390-1.030 0-1.410L5.990 4.580zm12.370 12.370c-.390-.390-1.030-.390-1.410 0-.390.390-.390 1.030 0 1.410l1.060 1.060c.390.390 1.030.390 1.410 0 .390-.390.390-1.030 0-1.410l-1.060-1.060zm1.060-10.960c.390-.390.390-1.030 0-1.410-.390-.390-1.030-.390-1.410 0l-1.060 1.060c-.390.390-.390 1.030 0 1.410s1.030.390 1.410 0l1.060-1.060zM7.050 18.360c.390-.390.390-1.030 0-1.410-.390-.390-1.030-.390-1.410 0l-1.060 1.060c-.390.390-.390 1.030 0 1.410s1.030.390 1.410 0l1.060-1.060z"/></svg>
</body></html>
